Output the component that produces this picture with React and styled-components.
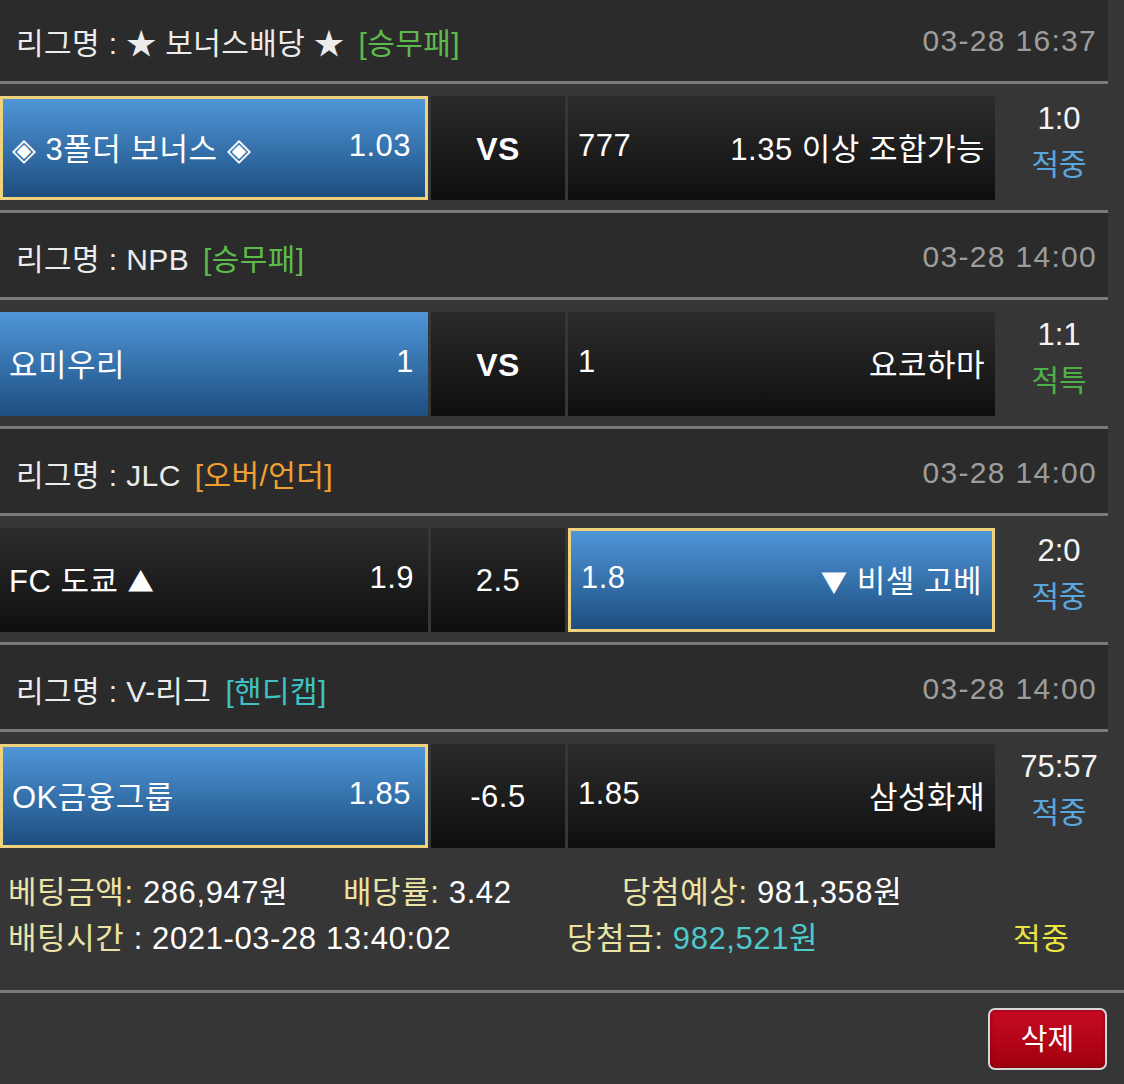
import React from "react";
import styled, { createGlobalStyle, css } from "styled-components";

const GlobalStyle = createGlobalStyle`
  html, body {
    margin: 0;
    padding: 0;
    background: #363636;
  }
  body {
    font-family: "Liberation Sans", "Noto Sans CJK KR", sans-serif;
    color: #f2f2f2;
  }
  * { box-sizing: border-box; }
`;

const Page = styled.div`
  width: 1124px;
  min-height: 1084px;
  background: #363636;
  overflow: hidden;
`;

const LeagueHeader = styled.div`
  width: 1108px;
  height: ${(p) => (p.$first ? "84px" : "90px")};
  background: #2b2b2b;
  border-top: ${(p) => (p.$first ? "0" : "3px solid #7a7a7a")};
  border-bottom: 3px solid #7a7a7a;
  display: flex;
  align-items: center;
  justify-content: space-between;
  padding: ${(p) => (p.$first ? "0 11px 0 16px" : "3px 11px 0 16px")};
  font-size: 30px;
  letter-spacing: 0.4px;
`;

const LeagueName = styled.div`
  color: #ececec;
  white-space: nowrap;
`;

const Sym = styled.span`
  font-family: "Noto Sans CJK KR", sans-serif;
  font-size: ${(p) => p.$size || "1em"};
`;

const Tag = styled.span`
  color: ${(p) => p.$color};
  margin-left: 14px;
`;

const DateText = styled.div`
  color: #9d9d9d;
  font-size: 30px;
  letter-spacing: 1.3px;
`;

const BetRow = styled.div`
  display: grid;
  grid-template-columns: 428px 134px 427px 1fr;
  column-gap: 3px;
  padding: 12px 0 10px;
  height: 126px;
`;

const Cell = styled.div`
  display: flex;
  align-items: center;
  justify-content: space-between;
  padding: ${(p) => (p.$side === "home" ? "0 14px 4px 9px" : "0 10px 4px 10px")};
  font-size: 31px;
  letter-spacing: 0.5px;
  color: #ffffff;
  white-space: nowrap;
  background: linear-gradient(#2d2d2d, #0f0f0f);
  ${(p) =>
    p.$on &&
    css`
      background: linear-gradient(#4f96d8, #1d4e80);
    `}
  ${(p) =>
    p.$picked &&
    css`
      border: 3px solid #f1d27c;
    `}
`;

const MidCell = styled.div`
  display: flex;
  align-items: center;
  justify-content: center;
  background: linear-gradient(#2a2a2a, #0e0e0e);
  color: #ffffff;
  font-size: ${(p) => (p.$bold ? "32px" : "31px")};
  font-weight: ${(p) => (p.$bold ? 700 : 400)};
  letter-spacing: 0.5px;
  padding-top: 2px;
`;

const Score = styled.div`
  display: flex;
  flex-direction: column;
  align-items: center;
  justify-content: center;
  padding: 0 4px 12px 0;
  line-height: 46px;
`;

const ScoreValue = styled.div`
  font-size: 31px;
  color: #f4f4f4;
`;

const Result = styled.div`
  font-size: 30px;
  color: ${(p) => p.$color};
`;

const Summary = styled.div`
  padding: 12px 0 28px 8px;
  display: flex;
  flex-direction: column;
  font-size: 31px;
  letter-spacing: 0.6px;
  line-height: 46px;
`;

const SummaryLine = styled.div`
  display: flex;
  white-space: nowrap;
`;

const SummaryItem = styled.div`
  width: ${(p) => (p.$w ? `${p.$w}px` : "auto")};
  color: #ffffff;
`;

const Label = styled.span`
  color: #ece3a6;
`;

const Money = styled.span`
  color: #4fcaca;
`;

const Hit = styled.span`
  color: #ebe33f;
  font-size: 30px;
`;

const Divider = styled.div`
  height: 3px;
  background: #7a7a7a;
`;

const Footer = styled.div`
  display: flex;
  justify-content: flex-end;
  padding: 15px 17px 0 0;
`;

const DeleteButton = styled.button`
  width: 119px;
  height: 62px;
  border: 2px solid #d6d6d6;
  border-radius: 7px;
  background: linear-gradient(#c70a22, #a1000f);
  color: #ffffff;
  font-family: "Liberation Sans", "Noto Sans CJK KR", sans-serif;
  font-size: 29px;
  padding: 0 0 4px;
  box-shadow: inset 0 0 4px rgba(0, 0, 0, 0.35);
`;

const matches = [
  {
    league: (
      <>
        <Sym>★</Sym> 보너스배당 <Sym>★</Sym>
      </>
    ),
    tag: "[승무패]",
    tagColor: "#5dbb4c",
    date: "03-28 16:37",
    home: [
      <>
        <Sym>◈</Sym> 3폴더 보너스 <Sym>◈</Sym>
      </>,
      "1.03",
    ],
    mid: "VS",
    away: ["777", "1.35 이상 조합가능"],
    pick: "home",
    picked: true,
    score: "1:0",
    result: "적중",
    resultColor: "#5aa7e0",
  },
  {
    league: "NPB",
    tag: "[승무패]",
    tagColor: "#5dbb4c",
    date: "03-28 14:00",
    home: ["요미우리", "1"],
    mid: "VS",
    away: ["1", "요코하마"],
    pick: "home",
    picked: false,
    score: "1:1",
    result: "적특",
    resultColor: "#4fb04a",
  },
  {
    league: "JLC",
    tag: "[오버/언더]",
    tagColor: "#f0a032",
    date: "03-28 14:00",
    home: [
      <>
        FC 도쿄 <Sym $size="0.85em">▲</Sym>
      </>,
      "1.9",
    ],
    mid: "2.5",
    away: [
      "1.8",
      <>
        <Sym $size="0.85em">▼</Sym> 비셀 고베
      </>,
    ],
    pick: "away",
    picked: true,
    score: "2:0",
    result: "적중",
    resultColor: "#5aa7e0",
  },
  {
    league: "V-리그",
    tag: "[핸디캡]",
    tagColor: "#3fc2c2",
    date: "03-28 14:00",
    home: ["OK금융그룹", "1.85"],
    mid: "-6.5",
    away: ["1.85", "삼성화재"],
    pick: "home",
    picked: true,
    score: "75:57",
    result: "적중",
    resultColor: "#5aa7e0",
  },
];

export default function App() {
  return (
    <Page>
      <GlobalStyle />
      {matches.map((m, i) => (
        <div key={i}>
          <LeagueHeader $first={i === 0}>
            <LeagueName>
              리그명 : {m.league}
              <Tag $color={m.tagColor}>{m.tag}</Tag>
            </LeagueName>
            <DateText>{m.date}</DateText>
          </LeagueHeader>
          <BetRow>
            <Cell
              $side="home"
              $on={m.pick === "home"}
              $picked={m.pick === "home" && m.picked}
            >
              <span>{m.home[0]}</span>
              <span>{m.home[1]}</span>
            </Cell>
            <MidCell $bold={m.mid === "VS"}>{m.mid}</MidCell>
            <Cell
              $side="away"
              $on={m.pick === "away"}
              $picked={m.pick === "away" && m.picked}
            >
              <span>{m.away[0]}</span>
              <span>{m.away[1]}</span>
            </Cell>
            <Score>
              <ScoreValue>{m.score}</ScoreValue>
              <Result $color={m.resultColor}>{m.result}</Result>
            </Score>
          </BetRow>
        </div>
      ))}
      <Summary>
        <SummaryLine>
          <SummaryItem $w={335}>
            <Label>베팅금액:</Label> 286,947원
          </SummaryItem>
          <SummaryItem $w={279}>
            <Label>배당률:</Label> 3.42
          </SummaryItem>
          <SummaryItem>
            <Label>당첨예상:</Label> 981,358원
          </SummaryItem>
        </SummaryLine>
        <SummaryLine>
          <SummaryItem $w={559}>
            <Label>배팅시간</Label> : 2021-03-28 13:40:02
          </SummaryItem>
          <SummaryItem $w={446}>
            <Label>당첨금:</Label> <Money>982,521원</Money>
          </SummaryItem>
          <SummaryItem>
            <Hit>적중</Hit>
          </SummaryItem>
        </SummaryLine>
      </Summary>
      <Divider />
      <Footer>
        <DeleteButton>삭제</DeleteButton>
      </Footer>
    </Page>
  );
}
